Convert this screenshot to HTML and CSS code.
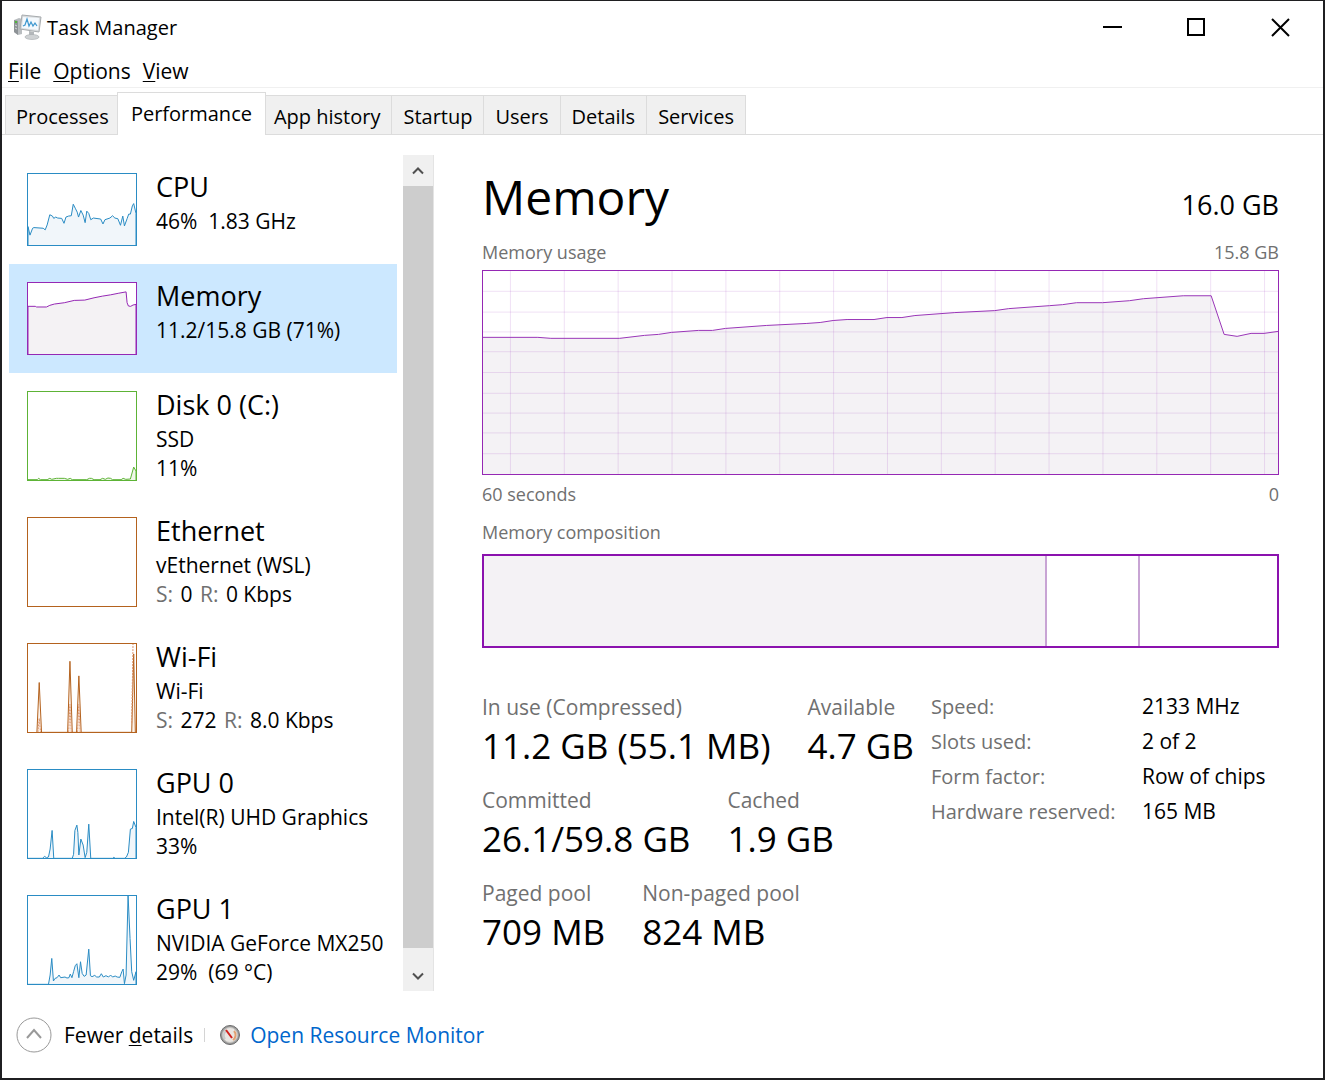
FILE: index.html
```html
<!DOCTYPE html>
<html lang="en">
<head>
    <meta charset="utf-8">
    <title>Task Manager</title>
    <link rel="stylesheet" href="styles.css">
</head>
<body>
    <div class="window">
        <header class="titlebar">
            <svg class="app-icon" viewBox="0 0 28 26" aria-hidden="true">
                <path d="M0 6l5-2 3 1v15l-4 1-4-3z" fill="#b9bdc0"/>
                <path d="M0 6l4 1v14l-4-3z" fill="#8d9296"/>
                <path d="M1 11l2 1M1 14l2 1" stroke="#d5d8da"/>
                <circle cx="2" cy="8" r="1" fill="#3fc21e"/>
                <path d="M8 1l19 2-2 15-19-3z" fill="#d9dcde" stroke="#a7abae"/>
                <path d="M9 3l16 1-1 12-16-2z" fill="#f4f9fd"/>
                <path d="M9 12l2-1 2-6 2 7 2-4 2 4 2-3 2 3" fill="none" stroke="#3d97cf" stroke-width="1.2"/>
                <path d="M15 17l5 1v4h-5z" fill="#b3b7ba"/>
                <ellipse cx="18" cy="23" rx="7" ry="2.5" fill="#cfd2d4" stroke="#a5a9ac" stroke-width=".6"/>
            </svg>
            <h1 class="app-title">Task Manager</h1>
            <div class="window-buttons">
                <button type="button" aria-label="Minimize"><svg viewBox="0 0 20 20"><path d="M1 10h19"/></svg></button>
                <button type="button" aria-label="Maximize"><svg viewBox="0 0 20 20"><path d="M2 2h16v16h-16z"/></svg></button>
                <button type="button" aria-label="Close"><svg viewBox="0 0 20 20"><path d="M2 2l17 17M19 2l-17 17"/></svg></button>
            </div>
        </header>

        <nav class="menubar">
            <button type="button"><u>F</u>ile</button>
            <button type="button"><u>O</u>ptions</button>
            <button type="button"><u>V</u>iew</button>
        </nav>

        <div class="tabs" role="tablist">
            <button type="button" role="tab">Processes</button>
            <button type="button" role="tab" class="active" aria-selected="true">Performance</button>
            <button type="button" role="tab">App history</button>
            <button type="button" role="tab">Startup</button>
            <button type="button" role="tab">Users</button>
            <button type="button" role="tab">Details</button>
            <button type="button" role="tab">Services</button>
        </div>

        <main class="content">
            <aside class="sidebar">
                <ul class="resources">
                    <li class="resource">
                        <svg class="thumb short blue" viewBox="0 0 327 216" preserveAspectRatio="none">
                            <path d="M0 160L6 186L14 165L18 163L46 165L52 170L58 155L66 124L74 128L78 135L84 131L90 134L102 135L109 150L115 131L123 128L131 127L137 92L143 104L149 116L153 131L160 111L167 125L173 148L178 113L184 120L190 139L198 134L220 137L227 152L233 139L248 134L256 127L263 134L272 136L280 156L287 128L292 158L300 136L305 122L310 122L316 97L320 90L327 120V220H0z"/>
                        </svg>
                        <div class="resource-text">
                            <h2>CPU</h2>
                            <p>46%&nbsp; 1.83 GHz</p>
                        </div>
                    </li>
                    <li class="resource selected">
                        <svg class="thumb short purple" viewBox="0 0 327 216" preserveAspectRatio="none">
                            <path d="M0 71L22 71L26 73L56 73L66 68L80 64L110 60L140 53L172 52L200 45L225 40L250 36L275 31L297 27L300 60L304 70L311 71L318 67L327 65V220H0z"/>
                        </svg>
                        <div class="resource-text">
                            <h2>Memory</h2>
                            <p>11.2/15.8 GB (71%)</p>
                        </div>
                    </li>
                    <li class="resource">
                        <svg class="thumb green" viewBox="0 2 327 265" preserveAspectRatio="none">
                            <path d="M0 266H28L32 262L38 266H58L66 262L72 265L86 262L92 262L110 262L120 265L128 262L134 266H178L186 262L192 262L200 266H218L226 262L234 265L242 261L250 262L256 266H282L288 262L296 265L310 264L320 228L327 240V280H0z"/>
                        </svg>
                        <div class="resource-text">
                            <h2>Disk 0 (C:)</h2>
                            <p>SSD</p>
                            <p>11%</p>
                        </div>
                    </li>
                    <li class="resource">
                        <svg class="thumb orange" viewBox="0 2 327 265" preserveAspectRatio="none"></svg>
                        <div class="resource-text">
                            <h2>Ethernet</h2>
                            <p>vEthernet (WSL)</p>
                            <p><span>S:</span> 0 <span>R:</span> 0 Kbps</p>
                        </div>
                    </li>
                    <li class="resource">
                        <svg class="thumb orange" viewBox="0 2 327 265" preserveAspectRatio="none">
                            <path d="M-9 280L27 268L34 118L41 268H120L127 54L134 268H147L154 98L161 268H314L320 32L325 268L340 280z"/>
                            <path class="dashed" d="M30 268L34 226L38 268M123 268L127 184L131 268M150 268L154 184L158 268M314 240L318 0"/>
                        </svg>
                        <div class="resource-text">
                            <h2>Wi-Fi</h2>
                            <p>Wi-Fi</p>
                            <p><span>S:</span> 272 <span>R:</span> 8.0 Kbps</p>
                        </div>
                    </li>
                    <li class="resource">
                        <svg class="thumb blue" viewBox="0 2 327 265" preserveAspectRatio="none">
                            <path d="M0 280V268H44L50 262L56 266L62 264L67 240L73 184L78 268H134L138 256L142 184L148 168L151 190L154 258L160 210L167 228L173 266L178 250L184 165L190 268H256L260 265L264 268H292L298 264L304 250L310 180L316 178L320 157L327 175V280z"/>
                        </svg>
                        <div class="resource-text">
                            <h2>GPU 0</h2>
                            <p>Intel(R) UHD Graphics</p>
                            <p>33%</p>
                        </div>
                    </li>
                    <li class="resource">
                        <svg class="thumb blue" viewBox="0 2 327 265" preserveAspectRatio="none">
                            <path d="M0 280V268H62L67 240L72 190L77 258L82 250L88 248L94 240L99 248L112 246L118 249L124 248L128 237L133 248L138 230L143 212L148 206L154 248L159 200L164 235L170 244L176 240L184 162L189 242L194 245L202 241L208 246L216 246L222 236L228 246L236 242L244 246L250 240L256 246L264 243L270 246L278 247L284 230L288 222L292 266L297 240L303 0L309 130L314 230L320 256L327 230V280z"/>
                        </svg>
                        <div class="resource-text">
                            <h2>GPU 1</h2>
                            <p>NVIDIA GeForce MX250</p>
                            <p>29%&nbsp; (69 °C)</p>
                        </div>
                    </li>
                </ul>
                <div class="scrollbar">
                    <button type="button" aria-label="Scroll up"><svg viewBox="0 0 12 12"><path d="M1 8.500l5-5 5 5"/></svg></button>
                    <div class="scroll-thumb"></div>
                    <button type="button" aria-label="Scroll down"><svg viewBox="0 0 12 12"><path d="M1 3.500l5 5 5-5"/></svg></button>
                </div>
            </aside>

            <section class="details">
                <div class="details-head">
                    <h2>Memory</h2>
                    <span class="total">16.0 GB</span>
                </div>
                <div class="caption"><span>Memory usage</span><span>15.8 GB</span></div>
                <svg class="usage-chart" viewBox="0 0 797 205" preserveAspectRatio="none">
                    <path class="area" d="M0 67H55L68 68H137L162 65L176 64L189 62L216 60L230 60L243 58L284 55L324 53L338 52L351 50L365 49L392 49L405 47L420 47L433 45L473 42L513 40L527 38L568 35L581 34L595 32L621 32L648 30L662 28L702 25H730L743 64L756 66L770 63L783 63L797 61V210H0z"/>
                    <path class="grid" d="M27.500 0V205M81.500 0V205M135.500 0V205M189.500 0V205M243.500 0V205M297.500 0V205M351.500 0V205M405.500 0V205M459.500 0V205M513.500 0V205M567.500 0V205M621.500 0V205M675.500 0V205M729.500 0V205M783.500 0V205M0 20.500H797M0 41.500H797M0 61.500H797M0 81.500H797M0 102.500H797M0 123.500H797M0 143.500H797M0 163.500H797M0 184.500H797"/>
                    <path class="line" d="M0 67H55L68 68H137L162 65L176 64L189 62L216 60L230 60L243 58L284 55L324 53L338 52L351 50L365 49L392 49L405 47L420 47L433 45L473 42L513 40L527 38L568 35L581 34L595 32L621 32L648 30L662 28L702 25H730L743 64L756 66L770 63L783 63L797 61"/>
                </svg>
                <div class="caption below"><span>60 seconds</span><span>0</span></div>
                <div class="caption"><span>Memory composition</span></div>
                <div class="composition">
                    <div class="in-use"></div>
                    <div class="standby"></div>
                    <div class="free"></div>
                </div>

                <div class="stats">
                    <div class="stat-rows">
                        <dl class="stat-row">
                            <div><dt>In use (Compressed)</dt><dd>11.2 GB (55.1 MB)</dd></div>
                            <div><dt>Available</dt><dd>4.7 GB</dd></div>
                        </dl>
                        <dl class="stat-row">
                            <div><dt>Committed</dt><dd>26.1/59.8 GB</dd></div>
                            <div><dt>Cached</dt><dd>1.9 GB</dd></div>
                        </dl>
                        <dl class="stat-row">
                            <div><dt>Paged pool</dt><dd>709 MB</dd></div>
                            <div><dt>Non-paged pool</dt><dd>824 MB</dd></div>
                        </dl>
                    </div>
                    <table class="hardware">
                        <tr><th scope="row">Speed:</th><td>2133 MHz</td></tr>
                        <tr><th scope="row">Slots used:</th><td>2 of 2</td></tr>
                        <tr><th scope="row">Form factor:</th><td>Row of chips</td></tr>
                        <tr><th scope="row">Hardware reserved:</th><td>165 MB</td></tr>
                    </table>
                </div>
            </section>
        </main>

        <footer class="footer">
            <button type="button" class="fewer">
                <svg viewBox="0 0 36 36" aria-hidden="true">
                    <circle cx="18" cy="18" r="17"/>
                    <path d="M11 21l7-8 7 8"/>
                </svg>
                <span>Fewer <u>d</u>etails</span>
            </button>
            <span class="divider"></span>
            <a href="#" class="monitor-link">
                <svg viewBox="0 0 22 22" aria-hidden="true">
                    <circle cx="11" cy="11" r="9.5" fill="#9c9c9c" stroke="#6c6c6c"/>
                    <circle cx="11" cy="11" r="7.5" fill="#e9e6e2" stroke="#c4c2bf"/>
                    <path d="M15 7a6 6 0 0 1-1 9" fill="none" stroke="#e2a071" stroke-width="2"/>
                    <path d="M6 15a6 6 0 0 1 1-8" fill="none" stroke="#c9c9c9" stroke-width="2"/>
                    <path d="M7 6l6 8" stroke="#d0201c" stroke-width="2"/>
                </svg>
                <span>Open Resource Monitor</span>
            </a>
        </footer>
    </div>
</body>
</html>
```
FILE: styles.css
```css
* {
    box-sizing: border-box;
}
body {
    margin: 0;
    font-family: "Open Sans", "Noto Sans", sans-serif;
    font-size: 20px;
    color: #000;
    background-color: #fff;
}
h1, h2, p, ul, dl, dd {
    margin: 0;
    padding: 0;
    font-weight: normal;
}
button {
    font: inherit;
    color: inherit;
    background: none;
    border: none;
    padding: 0;
}
u {
    text-decoration-thickness: 1px;
    text-underline-offset: 2px;
}
.window {
    display: flex;
    flex-direction: column;
    height: 100vh;
    border: 2px solid #1f1f21;
    border-top-width: 1px;
}

/* title bar and menu */
.titlebar {
    display: flex;
    align-items: center;
    height: 52px;
    padding-left: 12px;
}
.app-icon {
    width: 28px;
    height: 26px;
    margin-right: 5px;
}
.app-title {
    font-size: 20px;
}
.window-buttons {
    display: flex;
    margin-left: auto;
    padding-right: 1px;
}
.window-buttons button {
    display: flex;
    align-items: center;
    justify-content: center;
    width: 84px;
    height: 50px;
}
.window-buttons svg {
    width: 20px;
    height: 20px;
    fill: none;
    stroke: #000;
    stroke-width: 2px;
}
.menubar {
    display: flex;
    gap: 12px;
    height: 35px;
    padding: 2px 6px 0;
    font-size: 21px;
    border-bottom: 1px solid #f0f0f0;
}

/* tabs */
.tabs {
    display: flex;
    align-items: flex-end;
    height: 47px;
    padding-left: 3px;
    border-bottom: 1px solid #dcdcdc;
}
.tabs button {
    height: 39px;
    padding: 2px 11px 0;
    background-color: #f0f0f0;
    border: 1px solid #dcdcdc;
    border-left: none;
    border-bottom: none;
}
.tabs button:first-child {
    padding-left: 10px;
    border-left: 1px solid #dcdcdc;
}
.tabs .active {
    position: relative;
    height: 43px;
    margin: 0 -3px -1px -4px;
    padding: 0 13px 2px;
    background-color: #fff;
    border-left: 1px solid #dcdcdc;
}

/* resource list */
.content {
    display: flex;
    flex: 1;
    min-height: 0;
    padding-top: 20px;
}
.sidebar {
    display: flex;
    flex: none;
    width: 432px;
    padding-left: 7px;
}
.resources {
    flex: 1;
    margin-right: 6px;
    overflow: hidden;
    list-style: none;
}
.resource {
    display: flex;
    gap: 19px;
    padding: 0 0 18px 18px;
}
.resource.selected {
    background-color: #cce8ff;
}
.thumb {
    flex: none;
    width: 110px;
    height: 90px;
    margin-top: 18px;
    background-color: #fff;
    border: 1px solid currentColor;
}
.thumb.short {
    height: 73px;
}
.thumb path {
    stroke: currentColor;
    stroke-width: 1px;
    vector-effect: non-scaling-stroke;
}
.blue {
    color: #2a8cc4;
    fill: #f1f6fa;
}
.purple {
    color: #9528b4;
    fill: #f4f2f4;
}
.green {
    color: #5db336;
    fill: #eff7e9;
}
.orange {
    color: #b4621e;
    fill: #fcf3eb;
}
.thumb .dashed {
    fill: none;
    stroke: #dc9670;
    stroke-dasharray: 2 1;
}
.resource-text {
    height: 73px;
    padding-top: 14px;
    white-space: nowrap;
}
.resource-text h2 {
    margin-bottom: 2px;
    font-size: 27px;
    line-height: 36px;
}
.resource-text p {
    font-size: 21px;
    line-height: 29px;
}
.resource-text span {
    margin-right: 2px;
    color: #707070;
}
.resource-text span + span {
    margin-left: 2px;
}
.scrollbar {
    display: flex;
    flex-direction: column;
    width: 31px;
    background-color: #f0f0f0;
    border-right: 1px solid #e4e4e4;
}
.scrollbar button {
    display: flex;
    align-items: center;
    justify-content: center;
    height: 31px;
}
.scrollbar svg {
    width: 12px;
    height: 12px;
    fill: none;
    stroke: #505050;
    stroke-width: 2px;
}
.scroll-thumb {
    flex: 1;
    margin-bottom: 12px;
    background-color: #cdcdcd;
}

/* details pane */
.details {
    flex: 1;
    min-width: 0;
    padding: 0 44px 0 48px;
}
.details-head {
    display: flex;
    align-items: baseline;
    justify-content: space-between;
    height: 81px;
}
.details-head h2 {
    font-size: 48px;
    line-height: 84px;
}
.total {
    font-size: 27px;
}
.caption {
    display: flex;
    justify-content: space-between;
    margin-bottom: 2px;
    color: #707070;
    font-size: 18px;
    line-height: 32px;
}
.caption.below {
    margin-bottom: 3px;
    line-height: 38px;
}
.usage-chart {
    display: block;
    width: 100%;
    height: 205px;
    border: 1px solid #9528b4;
}
.usage-chart path {
    fill: none;
    vector-effect: non-scaling-stroke;
}
.usage-chart .area {
    fill: #f4f2f5;
}
.usage-chart .grid {
    stroke: #9528b4;
    stroke-opacity: 0.14;
}
.usage-chart .line {
    stroke: #9a35b8;
}
.composition {
    display: flex;
    height: 94px;
    margin-top: 6px;
    border: 2px solid #8b12ae;
}
.in-use {
    flex: 566;
    background-color: #f4f2f5;
    border-right: 2px solid #c8a4d4;
}
.standby {
    flex: 92;
    border-right: 2px solid #c8a4d4;
}
.free {
    flex: 138;
}
.stats {
    display: flex;
    justify-content: space-between;
    margin-top: 41px;
}
.stat-row {
    display: flex;
    gap: 37px;
    margin-bottom: 15px;
    white-space: nowrap;
}
.stat-row dt {
    color: #707070;
    font-size: 21px;
    line-height: 36px;
}
.stat-row dd {
    font-size: 35px;
    line-height: 42px;
}
.hardware {
    align-self: flex-start;
    flex: none;
    width: 348px;
    border-collapse: collapse;
    line-height: 35px;
    white-space: nowrap;
}
.hardware th {
    padding: 0;
    color: #707070;
    font-weight: normal;
    text-align: left;
}
.hardware td {
    width: 137px;
    padding: 0;
    font-size: 21px;
}

/* footer */
.footer {
    display: flex;
    align-items: center;
    height: 87px;
    padding-left: 14px;
    font-size: 21px;
}
.fewer {
    display: flex;
    align-items: center;
    gap: 12px;
}
.fewer svg {
    width: 36px;
    height: 36px;
    fill: none;
    stroke: #999;
}
.fewer path {
    stroke-width: 2px;
}
.divider {
    width: 1px;
    height: 14px;
    margin: 0 14px 0 11px;
    background-color: #d4d4d4;
}
.monitor-link {
    display: flex;
    align-items: center;
    gap: 9px;
    color: #0066cc;
    text-decoration: none;
}
.monitor-link svg {
    width: 22px;
    height: 22px;
}
```
